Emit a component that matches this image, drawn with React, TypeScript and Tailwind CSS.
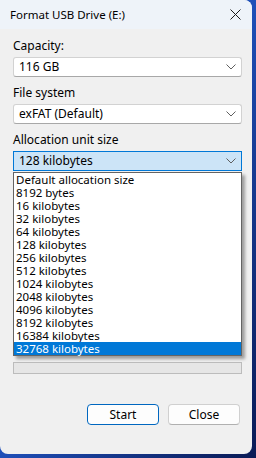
import React from "react";

const font = { fontFamily: '"Segoe UI", "Noto Sans", "Open Sans", sans-serif' };

function Chevron() {
  return (
    <svg width="10" height="6" viewBox="0 0 10 6" className="shrink-0">
      <path d="M0.5 0.5 L5 5 L9.5 0.5" fill="none" stroke="#5f5f5f" strokeWidth="1" />
    </svg>
  );
}

function Combo({ value, active }: { value: string; active?: boolean }) {
  return (
    <div
      className={
        active
          ? "h-[20px] w-[229px] flex items-center justify-between pl-[5px] pr-[5px] border border-[#0078d7] bg-[#cce4f7]"
          : "h-[20px] w-[229px] flex items-center justify-between pl-[5px] pr-[5px] border border-[#d2d2d2] border-b-[#a8a8a8] bg-white rounded-[3px]"
      }
    >
      <span className="text-[12px] leading-[16px] text-black">{value}</span>
      <Chevron />
    </div>
  );
}

const items = [
  "Default allocation size",
  "8192 bytes",
  "16 kilobytes",
  "32 kilobytes",
  "64 kilobytes",
  "128 kilobytes",
  "256 kilobytes",
  "512 kilobytes",
  "1024 kilobytes",
  "2048 kilobytes",
  "4096 kilobytes",
  "8192 kilobytes",
  "16384 kilobytes",
  "32768 kilobytes",
];

export default function App() {
  return (
    <div
      className="w-[256px] h-[458px] bg-gradient-to-br from-[#6aa6e8] via-[#1f4fb8] to-[#0a1a55] overflow-hidden"
      style={font}
    >
      <div className="w-[252px] h-[454px] bg-[#f0f0f0] rounded-br-[8px] rounded-bl-[8px] rounded-tr-[8px] overflow-hidden flex flex-col relative">
        {/* Title bar */}
        <div className="h-[29px] bg-[#eef3f9] flex items-center justify-between pl-[10px] pr-[10px] shrink-0">
          <span className="text-[11.5px] leading-[16px] text-black">Format USB Drive (E:)</span>
          <svg width="11" height="11" viewBox="0 0 11 11" className="mr-[1px]">
            <path d="M0.5 0.5 L10.5 10.5 M10.5 0.5 L0.5 10.5" stroke="#1a1a1a" strokeWidth="1" />
          </svg>
        </div>

        {/* Body */}
        <div className="flex flex-col pl-[13px] pt-[9px] relative">
          <div className="text-[12px] leading-[16px] text-black">Capacity:</div>
          <div className="mt-[3px]">
            <Combo value="116 GB" />
          </div>
          <div className="mt-[8px] text-[12px] leading-[16px] text-black">File system</div>
          <div className="mt-[3px]">
            <Combo value="exFAT (Default)" />
          </div>
          <div className="mt-[8px] text-[12px] leading-[16px] text-black">Allocation unit size</div>
          <div className="mt-[3px] relative">
            <Combo value="128 kilobytes" active />
            {/* Dropdown list overlay */}
            <div className="absolute left-0 top-[21px] w-[229px] bg-white border border-[#646464] shadow-[3px_3px_3px_rgba(0,0,0,0.35)] z-10 flex flex-col">
              {items.map((it, i) => (
                <div
                  key={it}
                  className={
                    i === items.length - 1
                      ? "h-[13px] flex items-center pl-[2px] bg-[#0078d7] text-white text-[11.5px] leading-[13px]"
                      : "h-[13px] flex items-center pl-[2px] text-black text-[11.5px] leading-[13px]"
                  }
                >
                  {it}
                </div>
              ))}
            </div>
          </div>

          {/* Content hidden under the open list */}
          <div className="h-[191px]" />

          {/* Progress bar */}
          <div className="h-[12px] w-[229px] bg-[#e6e6e6] border border-[#bcbcbc]" />

          {/* Buttons */}
          <div className="mt-[30px] flex justify-end gap-[9px] pr-[12px]">
            <button className="w-[72px] h-[21px] rounded-[4px] bg-[#fdfdfd] border border-[#0067c0] text-[12px] leading-[16px] text-black flex items-center justify-center">
              Start
            </button>
            <button className="w-[72px] h-[21px] rounded-[4px] bg-[#fdfdfd] border border-[#d0d0d0] border-b-[#b0b0b0] text-[12px] leading-[16px] text-black flex items-center justify-center">
              Close
            </button>
          </div>
        </div>
      </div>
    </div>
  );
}
